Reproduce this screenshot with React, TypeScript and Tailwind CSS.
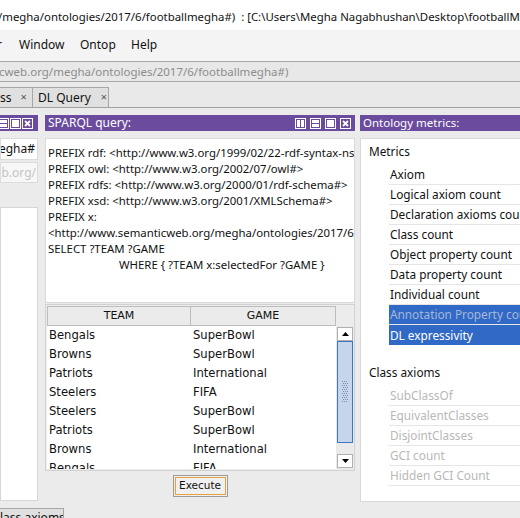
import React from "react";

const ui = { fontFamily: '"Noto Sans", "Open Sans", sans-serif' };
const swing = { fontFamily: '"DejaVu Sans", Verdana, sans-serif' };

function SplitV() {
  return (
    <svg width="11" height="11" viewBox="0 0 11 11" className="shrink-0">
      <rect x="0.5" y="0.5" width="10" height="10" fill="none" stroke="white" />
      <rect x="2" y="2" width="3" height="7" fill="white" />
      <rect x="6" y="2" width="3" height="7" fill="white" />
    </svg>
  );
}

function SplitH() {
  return (
    <svg width="11" height="11" viewBox="0 0 11 11" className="shrink-0">
      <rect x="0.5" y="0.5" width="10" height="10" fill="none" stroke="white" />
      <rect x="2" y="2" width="7" height="3" fill="white" />
      <rect x="2" y="6" width="7" height="3" fill="white" />
    </svg>
  );
}

function Maxi() {
  return (
    <svg width="11" height="11" viewBox="0 0 11 11" className="shrink-0">
      <rect x="0.5" y="0.5" width="10" height="10" fill="none" stroke="white" />
      <rect x="2" y="2" width="7" height="7" fill="white" />
    </svg>
  );
}

function CloseBox() {
  return (
    <svg width="11" height="11" viewBox="0 0 11 11" className="shrink-0">
      <rect x="0.5" y="0.5" width="10" height="10" fill="none" stroke="white" />
      <path d="M3 3 L8 8 M8 3 L3 8" stroke="white" strokeWidth="1.8" />
    </svg>
  );
}

const results: [string, string][] = [
  ["Bengals", "SuperBowl"],
  ["Browns", "SuperBowl"],
  ["Patriots", "International"],
  ["Steelers", "FIFA"],
  ["Steelers", "SuperBowl"],
  ["Patriots", "SuperBowl"],
  ["Browns", "International"],
  ["Bengals", "FIFA"],
];

const metrics = [
  "Axiom",
  "Logical axiom count",
  "Declaration axioms count",
  "Class count",
  "Object property count",
  "Data property count",
  "Individual count",
];

const classAxioms = ["SubClassOf", "EquivalentClasses", "DisjointClasses", "GCI count", "Hidden GCI Count"];

const sparql = [
  "PREFIX rdf: <http://www.w3.org/1999/02/22-rdf-syntax-ns#>",
  "PREFIX owl: <http://www.w3.org/2002/07/owl#>",
  "PREFIX rdfs: <http://www.w3.org/2000/01/rdf-schema#>",
  "PREFIX xsd: <http://www.w3.org/2001/XMLSchema#>",
  "PREFIX x:",
  "<http://www.semanticweb.org/megha/ontologies/2017/6/footballmegha#>",
  "SELECT ?TEAM ?GAME",
];

export default function App() {
  return (
    <div className="w-[520px] h-[518px] overflow-hidden bg-[#ebebeb] flex flex-col text-[12px] text-[#111]" style={ui}>
      {/* title bar */}
      <div className="h-[30px] bg-white flex items-center pt-[3px] whitespace-nowrap overflow-hidden shrink-0 text-[11.4px]">
        <span className="-ml-[2px]">
          /megha/ontologies/2017/6/footballmegha#)&nbsp; : [C:\Users\Megha Nagabhushan\Desktop\footballMegha.owl]
        </span>
      </div>

      {/* menu bar */}
      <div className="h-[31px] bg-[#f4f4f4] flex items-center pb-[2px] whitespace-nowrap shrink-0 text-[12px]">
        <span className="-ml-[3px] w-[22px]">r</span>
        <span className="w-[61px]">Window</span>
        <span className="w-[51px]">Ontop</span>
        <span>Help</span>
      </div>

      {/* address bar */}
      <div className="h-[21px] bg-[#e8e8e8] border-y border-[#a9a9a9] flex items-center whitespace-nowrap overflow-hidden shrink-0 text-[#8c8c8c] text-[11.5px]">
        <span className="-ml-[1px]">cweb.org/megha/ontologies/2017/6/footballmegha#)</span>
      </div>

      {/* tab row */}
      <div className="h-[26px] bg-[#e9e9e9] border-b border-[#a0a0a0] flex items-end shrink-0 text-[12px] whitespace-nowrap">
        <div className="h-[20px] w-[34px] bg-[#e0e0e0] border border-b-0 border-[#a6a6a6] flex items-center -ml-[1px] gap-[9px]">
          <span>ss</span>
          <span className="text-[11px] text-[#555]">×</span>
        </div>
        <div className="h-[20px] w-[76px] bg-[#e0e0e0] border border-b-0 border-l-0 border-[#a6a6a6] flex items-center pl-[5px] gap-[10px]">
          <span>DL Query</span>
          <span className="text-[11px] text-[#555]">×</span>
        </div>
      </div>

      {/* main area */}
      <div className="flex-1 flex min-h-0">
        {/* left column */}
        <div className="w-[38px] shrink-0 flex flex-col pt-[7px] pb-[3px] overflow-hidden">
          <div className="h-[16px] bg-[#6a4b9e] flex items-center justify-end gap-[1px] pr-[5px] shrink-0">
            <SplitH />
            <Maxi />
            <CloseBox />
          </div>
          <div className="h-[22px] mt-[7px] bg-white border border-[#dcdcdc] flex items-center justify-end whitespace-nowrap overflow-hidden text-[12px]">
            <span className="pr-[2px]">egha#</span>
          </div>
          <div className="h-[21px] mt-[2px] bg-[#f7f7f7] border border-[#dcdcdc] flex items-center justify-end whitespace-nowrap overflow-hidden text-[12px] text-[#c4c4c4]">
            <span className="pr-[1px]">eb.org/</span>
          </div>
          <div className="flex-1 mt-[24px] bg-white border border-[#d6d6d6]" />
        </div>

        {/* middle column */}
        <div className="w-[322px] shrink-0 flex flex-col pl-[7px] pr-[5px] pt-[7px]">
          <div className="h-[16px] bg-[#6a4b9e] flex items-center justify-between text-white pl-[3px] pr-[4px] shrink-0">
            <span className="text-[12px] leading-none">SPARQL query:</span>
            <div className="flex gap-[4px]">
              <SplitV />
              <SplitH />
              <Maxi />
              <CloseBox />
            </div>
          </div>
          <div className="h-[165px] mt-[7px] bg-white border border-[#dadada] pl-[2px] pt-[6px] overflow-hidden whitespace-nowrap leading-[16px] text-[11.4px] shrink-0">
            {sparql.map((l) => (
              <div key={l}>{l}</div>
            ))}
            <div className="pl-[71px]">WHERE {"{"} ?TEAM x:selectedFor ?GAME {"}"}</div>
          </div>

          {/* results */}
          <div className="h-[167px] mt-[1px] border border-[#d2d2d2] bg-[#ececec] p-[1px] flex flex-col shrink-0" style={swing}>
            <div className="flex h-[20px] shrink-0">
              <div className="w-[144px] bg-[#ebebeb] border border-[#bdbdbd] flex items-center justify-center text-[11px]">TEAM</div>
              <div className="w-[145px] bg-[#ebebeb] border border-l-0 border-[#bdbdbd] flex items-center justify-center text-[11px]">GAME</div>
            </div>
            <div className="flex flex-1 min-h-0">
              <div className="w-[289px] bg-white overflow-hidden text-[11.6px]">
                {results.map(([t, g], i) => (
                  <div key={i} className="flex h-[19px] items-center whitespace-nowrap">
                    <span className="w-[144px] pl-[2px]">{t}</span>
                    <span className="pl-[2px]">{g}</span>
                  </div>
                ))}
              </div>
              <div className="w-[17px] bg-[#eaeaea] flex flex-col py-[1px] pl-[1px]">
                <div className="h-[14px] bg-white border border-[#b0b0b0] flex items-center justify-center">
                  <svg width="7" height="4" viewBox="0 0 7 4"><path d="M0 4 L3.5 0 L7 4Z" fill="black" /></svg>
                </div>
                <div className="h-[102px] bg-[#c5d6ec] border border-[#3f74c9] flex items-center justify-center">
                  <svg width="7" height="22" viewBox="0 0 7 22">
                    {Array.from({ length: 11 }).map((_, r) =>
                      Array.from({ length: 3 }).map((__, c) => (
                        <rect key={`${r}-${c}`} x={c * 2 + (r % 2)} y={r * 2} width="1" height="1" fill="#7b8ca8" />
                      ))
                    )}
                  </svg>
                </div>
                <div className="flex-1" />
                <div className="h-[14px] bg-white border border-[#b0b0b0] flex items-center justify-center">
                  <svg width="7" height="4" viewBox="0 0 7 4"><path d="M0 0 L7 0 L3.5 4Z" fill="black" /></svg>
                </div>
              </div>
            </div>
          </div>

          <div className="flex justify-center mt-[4px]">
            <div className="w-[55px] h-[22px] border border-[#9c9c9c] bg-[#f0f0f0] p-[1px]">
              <div className="w-full h-full border border-[#e6a33a] flex items-center justify-center text-[10.5px]" style={swing}>
                Execute
              </div>
            </div>
          </div>
        </div>

        {/* right column */}
        <div className="flex-1 flex flex-col pt-[7px] pb-[2px] min-w-0">
          <div className="h-[16px] bg-[#6a4b9e] flex items-center text-white pl-[3px] shrink-0">
            <span className="text-[11.5px] leading-none whitespace-nowrap">Ontology metrics:</span>
          </div>
          <div className="flex-1 mt-[7px] bg-white border border-[#d8d8d8] border-r-0 overflow-hidden whitespace-nowrap text-[11.8px] pl-[8px]">
            <div className="h-[26px] flex items-center">Metrics</div>
            <div className="pl-[20px]">
              {metrics.map((m) => (
                <div key={m} className="h-[20px] flex items-center pt-[1px] border-b border-[#e6e6e6] pl-[1px]">{m}</div>
              ))}
              <div className="h-[20px] flex items-center pt-[1px] bg-[#3169c6] text-[#a6b7d8] pl-[1px] border-b border-[#e6e6e6]">
                Annotation Property count
              </div>
              <div className="h-[20px] flex items-center pt-[1px] bg-[#3169c6] text-white pl-[1px]">DL expressivity</div>
            </div>
            <div className="h-[24px] flex items-end mt-[13px]">Class axioms</div>
            <div className="pl-[20px] mt-[4px] text-[#b8b8b8]">
              {classAxioms.map((m) => (
                <div key={m} className="h-[20px] flex items-center pt-[1px] border-b border-[#e6e6e6] pl-[1px]">{m}</div>
              ))}
            </div>
          </div>
        </div>
      </div>

      {/* bottom tab row */}
      <div className="h-[14px] shrink-0 flex items-end overflow-hidden">
        <div className="h-[10px] w-[65px] bg-[#e0e0e0] border border-b-0 border-[#a6a6a6] overflow-hidden -ml-[1px]">
          <div className="text-[12px] leading-none pt-[3px] whitespace-nowrap">lass axioms</div>
        </div>
      </div>
    </div>
  );
}
